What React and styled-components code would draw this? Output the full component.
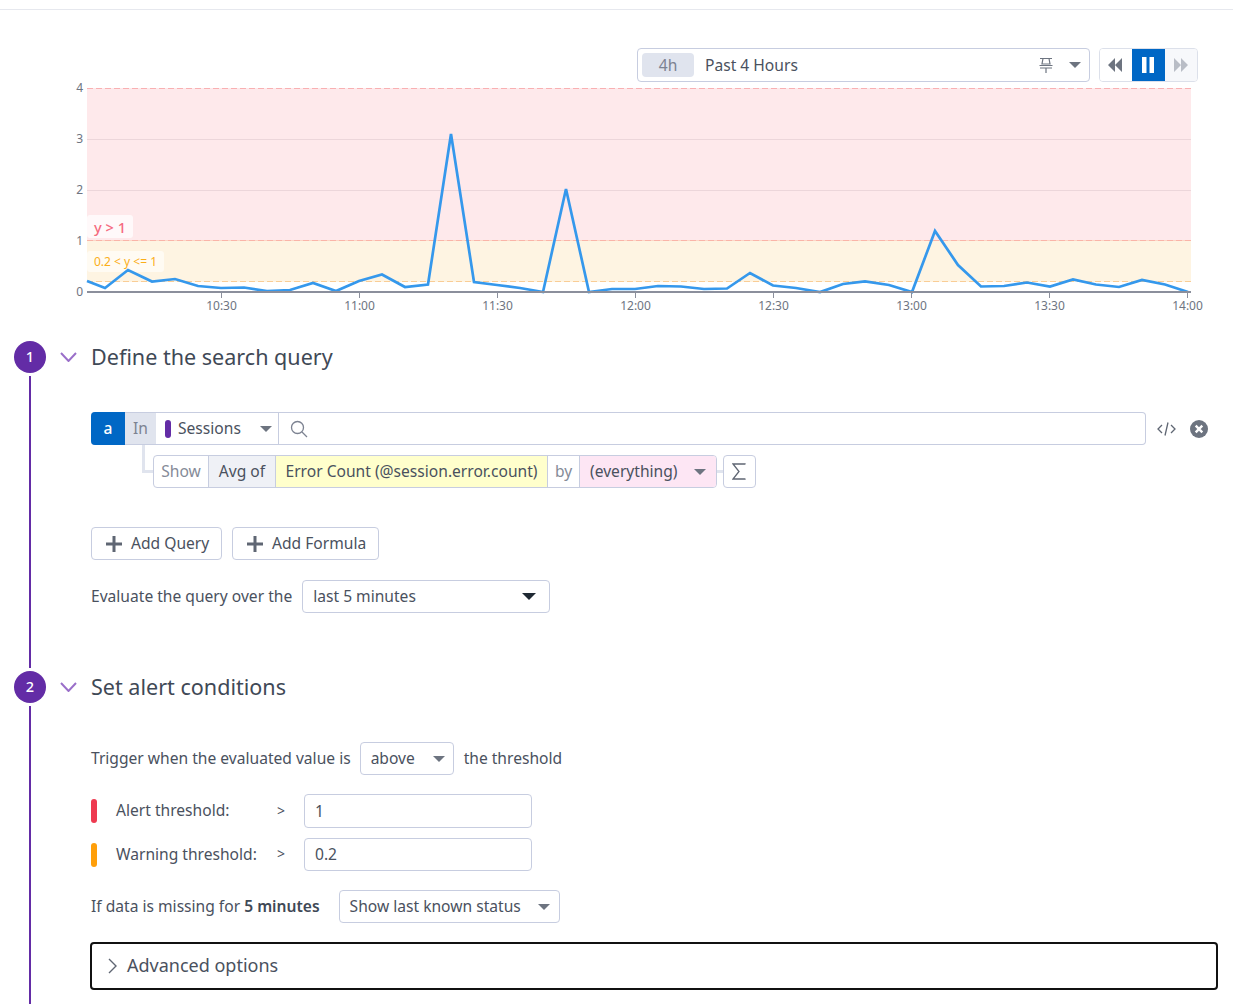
import React from "react";
import styled, { createGlobalStyle } from "styled-components";

const Global = createGlobalStyle`
  html, body { margin: 0; padding: 0; background: #fff; }
  body { font-family: "Noto Sans", "Open Sans", sans-serif; font-size: 15.6px; color: #4a515e; }
  * { box-sizing: border-box; }
`;

const Page = styled.div`
  display: flex;
  flex-direction: column;
  height: 1004px;
  overflow: hidden;
`;
const TopRule = styled.div`
  height: 10px;
  flex: none;
  border-bottom: 1px solid #e6e8ee;
`;
const Toolbar = styled.div`
  display: flex;
  justify-content: flex-end;
  gap: 9px;
  margin-top: 38px;
  padding-right: 35px;
  flex: none;
`;
const TimeSelect = styled.div`
  width: 453px;
  height: 34px;
  display: flex;
  align-items: center;
  padding: 0 8px 0 4px;
  border: 1px solid #c7cde0;
  border-radius: 4px;
`;
const TimeBadge = styled.span`
  width: 52px;
  height: 24px;
  display: flex;
  align-items: center;
  justify-content: center;
  background: #e0e4ee;
  border-radius: 4px;
  color: #7c8291;
`;
const TimeLabel = styled.span`
  flex: 1;
  margin-left: 11px;
`;
const PinIcon = styled.svg`
  margin-right: 16px;
  flex: none;
`;
const PlayGroup = styled.div`
  display: flex;
  height: 34px;
  width: 99px;
  border: 1px solid #dce0ea;
  border-radius: 4px;
  overflow: hidden;
`;
const PlayButton = styled.div`
  flex: 1;
  display: flex;
  align-items: center;
  justify-content: center;
  background: ${(p) => (p.$active ? "#0067c5" : p.$off ? "#f7f8fb" : "#fff")};
`;
const ChartSvg = styled.svg`
  display: block;
  flex: none;
  width: 1233px;
  height: 244px;
  margin-top: -6px;
  margin-bottom: 21px;
`;
const Section = styled.section`
  display: flex;
  flex: ${(p) => (p.$grow ? "1" : "none")};
  height: ${(p) => (p.$grow ? "auto" : "330px")};
`;
const Rail = styled.div`
  width: 46px;
  flex: none;
  padding-left: 14px;
  display: flex;
  flex-direction: column;
  align-items: center;
`;
const StepCircle = styled.div`
  width: 32px;
  height: 32px;
  flex: none;
  padding-bottom: 2px;
  border-radius: 50%;
  background: #632ca6;
  color: #fff;
  font-size: 14.5px;
  font-weight: 500;
  display: flex;
  align-items: center;
  justify-content: center;
`;
const RailLine = styled.div`
  flex: 1;
  width: 2px;
  margin: 3px 0 ${(p) => (p.$last ? "0" : "3px")};
  background: #632ca6;
`;
const Content = styled.div`
  flex: 1;
  min-width: 0;
  padding-right: 15px;
`;
const Header = styled.div`
  display: flex;
  align-items: center;
  height: 32px;
  padding-left: 14px;
`;
const Title = styled.h2`
  margin: 0 0 2px 14px;
  font-size: 21.55px;
  font-weight: 400;
  color: #3f4956;
`;
const Body = styled.div`
  margin-left: 45px;
  padding-top: ${(p) => p.$top}px;
`;
const Txt = styled.span`
  margin-bottom: 2px;
  margin-right: ${(p) => p.$mr ?? 0}px;
`;
const QueryRow = styled.div`
  display: flex;
  align-items: center;
  height: 33px;
`;
const QueryBar = styled.div`
  flex: 1;
  height: 33px;
  display: flex;
  border: 1px solid #c7cde0;
  border-left: 0;
  border-radius: 4px;
`;
const Letter = styled.div`
  width: 34px;
  margin: -1px 0;
  padding-bottom: 2px;
  background: #0067c5;
  color: #fff;
  font-weight: 500;
  border-radius: 4px 0 0 4px;
  display: flex;
  align-items: center;
  justify-content: center;
`;
const Seg = styled.div`
  width: ${(p) => p.$w}px;
  flex: none;
  display: flex;
  align-items: center;
  justify-content: ${(p) => (p.$center ? "center" : "flex-start")};
  padding: 0 ${(p) => p.$pad ?? 0}px;
  background: ${(p) => p.$bg || "transparent"};
  color: ${(p) => p.$color || "inherit"};
  border-right: ${(p) => (p.$noLine ? "0" : "1px solid #c7cde0")};
`;
const SourceDot = styled.span`
  width: 6px;
  height: 18px;
  border-radius: 3px;
  background: #632ca6;
  margin: 0 7px 0 3px;
  flex: none;
`;
const Grow = styled.span`
  flex: 1;
`;
const SearchSeg = styled.div`
  flex: 1;
  display: flex;
  align-items: center;
  padding-left: 11px;
`;
const RowActions = styled.div`
  width: 72px;
  flex: none;
  display: flex;
  align-items: center;
  padding-left: 11px;
  gap: 14px;
`;
const MetricRow = styled.div`
  display: flex;
  height: 33px;
  margin: 10px 0 39px 62px;
  position: relative;
`;
const Elbow = styled.div`
  position: absolute;
  left: -11px;
  top: -10px;
  width: 11px;
  height: 28px;
  border-left: 3px solid #e0e4ee;
  border-bottom: 3px solid #e0e4ee;
`;
const MetricBar = styled.div`
  display: flex;
  width: 564px;
  border: 1px solid #c7cde0;
  border-radius: 4px;
  overflow: hidden;
`;
const Link = styled.div`
  width: 6px;
  height: 3px;
  align-self: center;
  background: #e0e4ee;
`;
const SigmaButton = styled.div`
  width: 33px;
  height: 33px;
  padding-right: 2px;
  border: 1px solid #c7cde0;
  border-radius: 4px;
  display: flex;
  align-items: center;
  justify-content: center;
`;
const ButtonRow = styled.div`
  display: flex;
  gap: 10px;
  margin-bottom: 20px;
`;
const AddButton = styled.div`
  width: ${(p) => p.$w}px;
  height: 33px;
  display: flex;
  align-items: center;
  gap: 9px;
  padding-left: 14px;
  border: 1px solid #c7cde0;
  border-radius: 4px;
`;
const InlineRow = styled.div`
  display: flex;
  align-items: center;
  gap: ${(p) => p.$gap ?? 10}px;
  margin-bottom: ${(p) => p.$mb ?? 0}px;
`;
const Dropdown = styled.div`
  width: ${(p) => p.$w}px;
  height: 33px;
  flex: none;
  display: flex;
  align-items: center;
  justify-content: space-between;
  padding: 0 ${(p) => p.$right ?? 8}px 0 10px;
  border: 1px solid #c7cde0;
  border-radius: 4px;
`;
const Threshold = styled.div`
  display: flex;
  align-items: center;
  height: ${(p) => p.$h}px;
  margin-bottom: ${(p) => p.$mb}px;
`;
const ColorBar = styled.span`
  width: 6px;
  height: 24px;
  flex: none;
  border-radius: 3px;
  background: ${(p) => p.$color};
`;
const ThresholdLabel = styled.span`
  width: 161px;
  margin: 0 0 2px 19px;
  flex: none;
`;
const Gt = styled.span`
  width: 27px;
  margin-bottom: 2px;
  flex: none;
  font-size: 14px;
`;
const ThresholdInput = styled.input`
  width: 228px;
  height: 100%;
  padding: 0 10px ${(p) => p.$pb ?? 0}px;
  border: 1px solid #c7cde0;
  border-radius: 4px;
  font: inherit;
  color: inherit;
  outline: none;
`;
const Strong = styled.b`
  font-weight: 600;
  color: #3f4956;
`;
const Advanced = styled.div`
  height: 48px;
  margin-left: -1px;
  display: flex;
  align-items: center;
  gap: 9px;
  padding-left: 15px;
  border: 2px solid #111;
  border-radius: 4px;
  font-size: 18px;
`;

const Caret = ({ color = "#6d7480", w = 12 }) => (
  <svg width={w} height={w / 2} viewBox="0 0 12 6" style={{ flex: "none" }}>
    <path d="M0 0h12L6 6z" fill={color} />
  </svg>
);
const Chevron = () => (
  <svg width="17" height="10" viewBox="0 0 17 10" style={{ flex: "none" }}>
    <path d="M1 1l7.5 8L16 1" fill="none" stroke="#9a6fc9" strokeWidth="2" />
  </svg>
);
const Plus = () => (
  <svg width="16" height="16" viewBox="0 0 16 16" style={{ flex: "none" }}>
    <path d="M8 0v16M0 8h16" stroke="#5f6673" strokeWidth="3" />
  </svg>
);

const pts = [
  [87,281],[105,288],[128,270],[152,281.5],[175,279],[198,286],[221,288],[244,287.5],[267,291],[290,290],
  [313,283],[336,291],[359,281],[382,274.5],[405,287],[428,284.5],[451,134],[474,282],[497,285],[520,288],
  [543,292],[566,189],[589,292],[612,289],[635,289],[658,286],[681,286.5],[704,289],[727,288.5],[750,273],
  [773,285.5],[796,288],[820,292],[843,284],[865,281.3],[889,285],[912,292],[935,231],[958,265],[981,286.5],
  [1004,286],[1027,282.5],[1050,286.5],[1073,279.5],[1096,284.5],[1119,287],[1142,280],[1165,284.5],[1188,292],
];
const ticks = [
  [221.5,"10:30"],[359.5,"11:00"],[497.5,"11:30"],[635.5,"12:00"],[773.5,"12:30"],
  [911.5,"13:00"],[1049.5,"13:30"],[1187.5,"14:00"],
];
const yLabels = [[88,"4"],[139,"3"],[190,"2"],[241,"1"],[292,"0"]];

const Chart = () => (
  <ChartSvg viewBox="0 76 1233 244" fontFamily="Noto Sans, sans-serif">
    <rect x="87" y="88" width="1104" height="153" fill="#fee9eb" />
    <rect x="87" y="241" width="1104" height="41" fill="#fef4e2" />
    <path d="M87 139.5h1104M87 190.5h1104" stroke="#ecd6da" />
    <path d="M87 88.5h1104" stroke="#f9b0b2" strokeDasharray="6 3" />
    <path d="M87 240.5h1104" stroke="#fcd6c6" />
    <path d="M87 240.5h1104" stroke="#fab4a8" strokeDasharray="6 3" />
    <path d="M87 281.5h1104" stroke="#f9cd96" strokeDasharray="6 3" />
    <rect x="87" y="215" width="46" height="23" rx="3" fill="#fff" fillOpacity=".72" />
    <text x="94" y="233" fontSize="14.6" fontWeight="500" fill="#f56b80">y &gt; 1</text>
    <rect x="87" y="251" width="77" height="21" rx="3" fill="#fff" fillOpacity=".6" />
    <text x="94" y="266" fontSize="12" fill="#fbae18">0.2 &lt; y &lt;= 1</text>
    <polyline points={pts.map((p) => p.join(",")).join(" ")} fill="none" stroke="#3598ec" strokeWidth="2.7" strokeLinejoin="miter" />
    <rect x="87" y="291" width="1104" height="2" fill="#8b8f9c" />
    {ticks.map(([x, t]) => (
      <g key={t}>
        <path d={`M${x} 293v5`} stroke="#8b8f9c" />
        <text x={x} y="310" fontSize="12" fill="#6e7481" textAnchor="middle">{t}</text>
      </g>
    ))}
    {yLabels.map(([y, t]) => (
      <text key={t} x="83" y={y + 4} fontSize="12" fill="#6e7481" textAnchor="end">{t}</text>
    ))}
  </ChartSvg>
);

export default function App() {
  return (
    <Page>
      <Global />
      <TopRule />
      <Toolbar>
        <TimeSelect>
          <TimeBadge>4h</TimeBadge>
          <TimeLabel>Past 4 Hours</TimeLabel>
          <PinIcon width="14" height="16" viewBox="0 0 14 16">
            <path d="M1 1.5h12M4 1.5l-1 5.5h8l-1-5.5M0.5 8.5h13M1 11h12M7 11v5" fill="none" stroke="#6d7480" strokeWidth="1.2" />
          </PinIcon>
          <Caret />
        </TimeSelect>
        <PlayGroup>
          <PlayButton>
            <svg width="16" height="14" viewBox="0 0 16 14" style={{ marginRight: 2 }}><path d="M8 0v14L1 7zM15 0v14L8 7z" fill="#6d7480" /></svg>
          </PlayButton>
          <PlayButton $active>
            <svg width="14" height="16" viewBox="0 0 14 16"><path d="M1 0h4.5v16H1zM8.5 0H13v16H8.5z" fill="#fff" /></svg>
          </PlayButton>
          <PlayButton $off>
            <svg width="16" height="14" viewBox="0 0 16 14"><path d="M1 0v14l7-7zM8 0v14l7-7z" fill="#b9bdc6" /></svg>
          </PlayButton>
        </PlayGroup>
      </Toolbar>
      <Chart />

      <Section>
        <Rail>
          <StepCircle>1</StepCircle>
          <RailLine />
        </Rail>
        <Content>
          <Header>
            <Chevron />
            <Title>Define the search query</Title>
          </Header>
          <Body $top={39}>
            <QueryRow>
              <QueryBar>
                <Letter>a</Letter>
                <Seg $w={31} $center $bg="#e0e4ee" $color="#7c8291" $noLine><Txt>In</Txt></Seg>
                <Seg $w={123} $pad={6}>
                  <SourceDot />
                  <Txt>Sessions</Txt>
                  <Grow />
                  <Caret />
                </Seg>
                <SearchSeg>
                  <svg width="18" height="18" viewBox="0 0 18 18" fill="none" stroke="#7c8291" strokeWidth="1.3">
                    <circle cx="7.5" cy="7.5" r="6" />
                    <path d="M12 12l5 5" />
                  </svg>
                </SearchSeg>
              </QueryBar>
              <RowActions>
                <svg width="19" height="14" viewBox="0 0 19 14" fill="none" stroke="#5f6673" strokeWidth="1.3">
                  <path d="M5 3L1 7l4 4M14 3l4 4-4 4M11 0.5L8 13.5" />
                </svg>
                <svg width="18" height="18" viewBox="0 0 18 18">
                  <circle cx="9" cy="9" r="9" fill="#6d7480" />
                  <path d="M5.7 5.7l6.6 6.6M12.3 5.7l-6.6 6.6" stroke="#fff" strokeWidth="2.4" />
                </svg>
              </RowActions>
            </QueryRow>
            <MetricRow>
              <Elbow />
              <MetricBar>
                <Seg $w={55} $center $color="#858b98"><Txt>Show</Txt></Seg>
                <Seg $w={67} $center $bg="#eff1f6"><Txt>Avg of</Txt></Seg>
                <Seg $w={272} $center $bg="#ffffcc"><Txt>Error Count (@session.error.count)</Txt></Seg>
                <Seg $w={32} $center $color="#858b98"><Txt>by</Txt></Seg>
                <Seg $w={136} $pad={10} $bg="#fde6f4" $noLine>
                  <Txt>(everything)</Txt>
                  <Grow />
                  <Caret />
                </Seg>
              </MetricBar>
              <Link />
              <SigmaButton>
                <svg width="14" height="17" viewBox="0 0 14 17" fill="none" stroke="#5f6673" strokeWidth="1.3">
                  <path d="M13 1.5V1H1l6 7.5L1 16h12v-.5" />
                </svg>
              </SigmaButton>
            </MetricRow>
            <ButtonRow>
              <AddButton $w={131}><Plus /><Txt>Add Query</Txt></AddButton>
              <AddButton $w={147}><Plus /><Txt>Add Formula</Txt></AddButton>
            </ButtonRow>
            <InlineRow>
              <Txt>Evaluate the query over the</Txt>
              <Dropdown $w={248} $right={13}>
                <Txt>last 5 minutes</Txt>
                <Caret color="#1f2933" w={14} />
              </Dropdown>
            </InlineRow>
          </Body>
        </Content>
      </Section>

      <Section $grow>
        <Rail>
          <StepCircle>2</StepCircle>
          <RailLine $last />
        </Rail>
        <Content>
          <Header>
            <Chevron />
            <Title>Set alert conditions</Title>
          </Header>
          <Body $top={39}>
            <InlineRow $gap={10} $mb={19}>
              <Txt $mr={-1}>Trigger when the evaluated value is</Txt>
              <Dropdown $w={94} $right={8}>
                <Txt>above</Txt>
                <Caret />
              </Dropdown>
              <Txt>the threshold</Txt>
            </InlineRow>
            <Threshold $h={34} $mb={10}>
              <ColorBar $color="#ee3a50" />
              <ThresholdLabel>Alert threshold:</ThresholdLabel>
              <Gt>&gt;</Gt>
              <ThresholdInput readOnly value="1" />
            </Threshold>
            <Threshold $h={33} $mb={19}>
              <ColorBar $color="#ff9f0a" />
              <ThresholdLabel>Warning threshold:</ThresholdLabel>
              <Gt>&gt;</Gt>
              <ThresholdInput readOnly value="0.2" $pb={2} />
            </Threshold>
            <InlineRow $gap={19} $mb={19}>
              <Txt>If data is missing for <Strong>5 minutes</Strong></Txt>
              <Dropdown $w={221} $right={9}>
                <Txt>Show last known status</Txt>
                <Caret />
              </Dropdown>
            </InlineRow>
            <Advanced>
              <svg width="11" height="16" viewBox="0 0 11 16" fill="none" stroke="#5f6673" strokeWidth="1.4">
                <path d="M2 1l7 7-7 7" />
              </svg>
              <Txt>Advanced options</Txt>
            </Advanced>
          </Body>
        </Content>
      </Section>
    </Page>
  );
}
